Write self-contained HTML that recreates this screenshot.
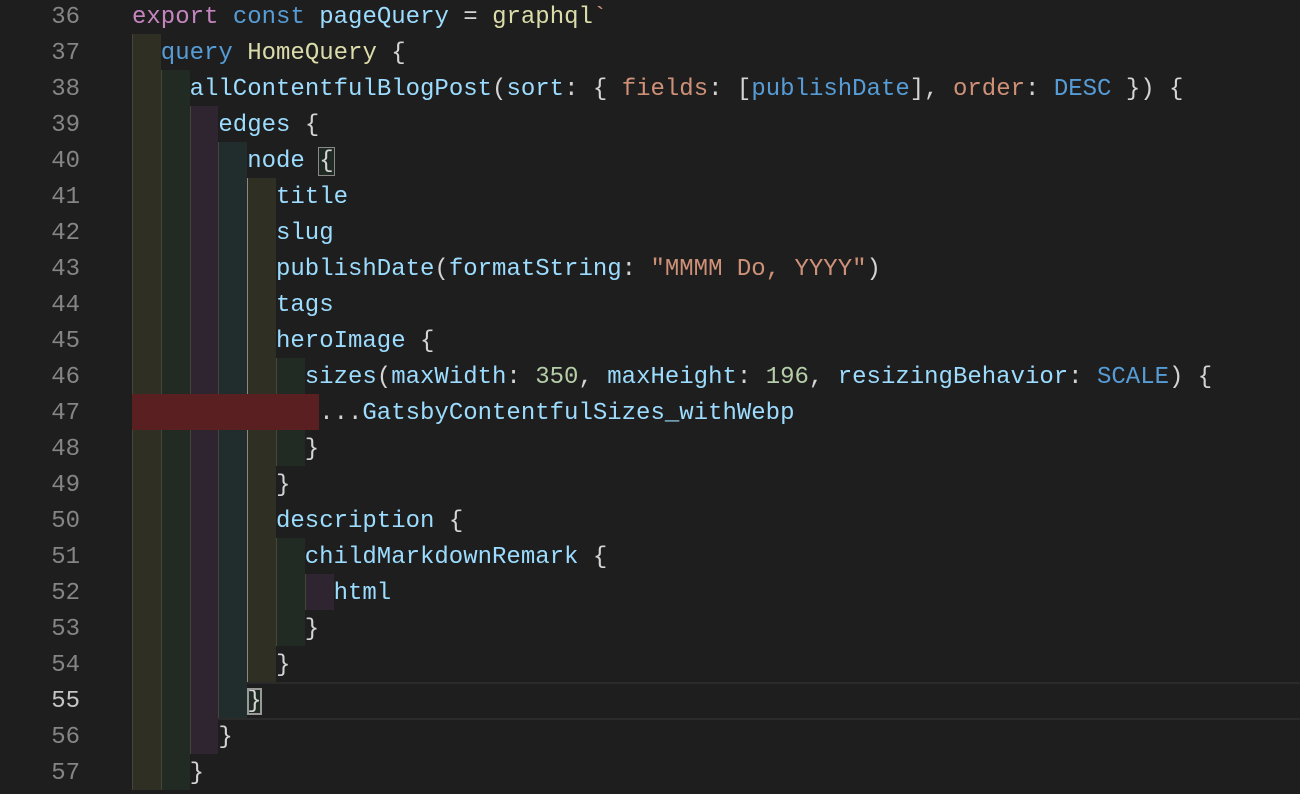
<!DOCTYPE html>
<html><head><meta charset="utf-8"><style>
body{margin:0;width:1300px;height:788px;background:#1e1e1e;overflow:hidden;font-family:"Liberation Mono",monospace;font-size:24px;}
.ln{position:absolute;left:0;width:80px;text-align:right;color:#858585;height:36px;line-height:40px;}
.l{position:absolute;left:132px;height:36px;line-height:40px;white-space:pre;color:#9cdcfe;right:0}
.b{display:inline-block;width:28.8px;height:36px;vertical-align:top;box-sizing:border-box;border-left:1px solid #45453c}
.o{background:#2f2f23}.g{background:#222a24}.p{background:#2f2530}.t{background:#212c2d}
.k{color:#569cd6}.m{color:#c586c0}.f{color:#dcdcaa}.s{color:#ce9178}.n{color:#b5cea8}.w{color:#d4d4d4}
.r{display:inline-block;width:187.2px;height:36px;vertical-align:top;background:#5a1f20}
</style></head><body>
<div class="ln" style="top:-2px">36</div><div class="ln" style="top:34px">37</div><div class="ln" style="top:70px">38</div><div class="ln" style="top:106px">39</div><div class="ln" style="top:142px">40</div><div class="ln" style="top:178px">41</div><div class="ln" style="top:214px">42</div><div class="ln" style="top:250px">43</div><div class="ln" style="top:286px">44</div><div class="ln" style="top:322px">45</div><div class="ln" style="top:358px">46</div><div class="ln" style="top:394px">47</div><div class="ln" style="top:430px">48</div><div class="ln" style="top:466px">49</div><div class="ln" style="top:502px">50</div><div class="ln" style="top:538px">51</div><div class="ln" style="top:574px">52</div><div class="ln" style="top:610px">53</div><div class="ln" style="top:646px">54</div><div class="ln" style="top:682px;color:#c6c6c6">55</div><div class="ln" style="top:718px">56</div><div class="ln" style="top:754px">57</div>
<div style="position:absolute;left:132px;right:0;top:682px;height:34px;border-top:2px solid #2a2a2a;border-bottom:2px solid #2a2a2a;"></div>

<div class="l" style="top:-2px"><span class="m">export</span> <span class="k">const</span> pageQuery <span class="w">=</span> <span class="f">graphql</span><span class="s">`</span></div>
<div class="l" style="top:34px"><span class="b o"></span><span class="k">query</span> <span class="f">HomeQuery</span> <span class="w">{</span></div>
<div class="l" style="top:70px"><span class="b o"></span><span class="b g"></span>allContentfulBlogPost<span class="w">(</span>sort<span class="w">: {</span> <span class="s">fields</span><span class="w">: [</span><span class="k">publishDate</span><span class="w">],</span> <span class="s">order</span><span class="w">:</span> <span class="k">DESC</span> <span class="w">}) {</span></div>
<div class="l" style="top:106px"><span class="b o"></span><span class="b g"></span><span class="b p"></span>edges <span class="w">{</span></div>
<div class="l" style="top:142px"><span class="b o"></span><span class="b g"></span><span class="b p"></span><span class="b t"></span>node <span class="w" style="outline:1px solid #888;background:#1f2a22">{</span></div>
<div class="l" style="top:178px"><span class="b o"></span><span class="b g"></span><span class="b p"></span><span class="b t"></span><span class="b o" style="border-color:#8a8a80"></span>title</div>
<div class="l" style="top:214px"><span class="b o"></span><span class="b g"></span><span class="b p"></span><span class="b t"></span><span class="b o" style="border-color:#8a8a80"></span>slug</div>
<div class="l" style="top:250px"><span class="b o"></span><span class="b g"></span><span class="b p"></span><span class="b t"></span><span class="b o" style="border-color:#8a8a80"></span>publishDate<span class="w">(</span>formatString<span class="w">:</span> <span class="s">"MMMM Do, YYYY"</span><span class="w">)</span></div>
<div class="l" style="top:286px"><span class="b o"></span><span class="b g"></span><span class="b p"></span><span class="b t"></span><span class="b o" style="border-color:#8a8a80"></span>tags</div>
<div class="l" style="top:322px"><span class="b o"></span><span class="b g"></span><span class="b p"></span><span class="b t"></span><span class="b o" style="border-color:#8a8a80"></span>heroImage <span class="w">{</span></div>
<div class="l" style="top:358px"><span class="b o"></span><span class="b g"></span><span class="b p"></span><span class="b t"></span><span class="b o" style="border-color:#8a8a80"></span><span class="b g"></span>sizes<span class="w">(</span>maxWidth<span class="w">:</span> <span class="n">350</span><span class="w">,</span> maxHeight<span class="w">:</span> <span class="n">196</span><span class="w">,</span> resizingBehavior<span class="w">:</span> <span class="k">SCALE</span><span class="w">) {</span></div>
<div class="l" style="top:394px"><span class="r"></span><span class="w">...</span>GatsbyContentfulSizes_withWebp</div>
<div class="l" style="top:430px"><span class="b o"></span><span class="b g"></span><span class="b p"></span><span class="b t"></span><span class="b o" style="border-color:#8a8a80"></span><span class="b g"></span><span class="w">}</span></div>
<div class="l" style="top:466px"><span class="b o"></span><span class="b g"></span><span class="b p"></span><span class="b t"></span><span class="b o" style="border-color:#8a8a80"></span><span class="w">}</span></div>
<div class="l" style="top:502px"><span class="b o"></span><span class="b g"></span><span class="b p"></span><span class="b t"></span><span class="b o" style="border-color:#8a8a80"></span>description <span class="w">{</span></div>
<div class="l" style="top:538px"><span class="b o"></span><span class="b g"></span><span class="b p"></span><span class="b t"></span><span class="b o" style="border-color:#8a8a80"></span><span class="b g"></span>childMarkdownRemark <span class="w">{</span></div>
<div class="l" style="top:574px"><span class="b o"></span><span class="b g"></span><span class="b p"></span><span class="b t"></span><span class="b o" style="border-color:#8a8a80"></span><span class="b g"></span><span class="b p"></span>html</div>
<div class="l" style="top:610px"><span class="b o"></span><span class="b g"></span><span class="b p"></span><span class="b t"></span><span class="b o" style="border-color:#8a8a80"></span><span class="b g"></span><span class="w">}</span></div>
<div class="l" style="top:646px"><span class="b o"></span><span class="b g"></span><span class="b p"></span><span class="b t"></span><span class="b o" style="border-color:#8a8a80"></span><span class="w">}</span></div>
<div class="l" style="top:682px"><span class="b o"></span><span class="b g"></span><span class="b p"></span><span class="b t"></span><span class="w" style="outline:2px solid #999;outline-offset:-2px;background:#1f2a22">}</span></div>
<div class="l" style="top:718px"><span class="b o"></span><span class="b g"></span><span class="b p"></span><span class="w">}</span></div>
<div class="l" style="top:754px"><span class="b o"></span><span class="b g"></span><span class="w">}</span></div>
</body></html>
